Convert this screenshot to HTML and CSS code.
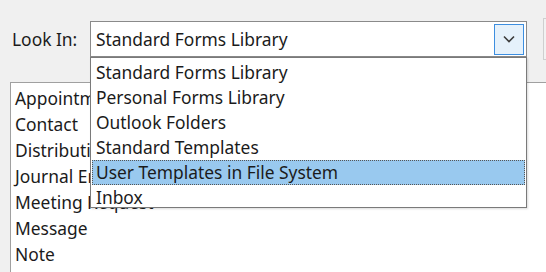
FILE: index.html
```html
<!DOCTYPE html>
<html>
<head>
<meta charset="utf-8">
<link rel="stylesheet" href="styles.css">
</head>
<body>
<div class="dialog">
  <div class="toolbar">
    <span class="label">Look In:</span>
    <div class="combo">
      <span class="combo-text">Standard Forms Library</span>
      <span class="combo-btn">
        <svg width="12" height="8" viewBox="0 0 12 8"><path d="M1 1.5 L6 6.5 L11 1.5" fill="none" stroke="#3c3c3c" stroke-width="1.6"/></svg>
      </span>
    </div>
    <div class="side-btn"></div>
  </div>
  <div class="list">
    <div class="item">Appointment</div>
    <div class="item">Contact</div>
    <div class="item">Distribution List</div>
    <div class="item">Journal Entry</div>
    <div class="item">Meeting Request</div>
    <div class="item">Message</div>
    <div class="item">Note</div>
  </div>
  <ul class="dropdown">
    <li>Standard Forms Library</li>
    <li>Personal Forms Library</li>
    <li>Outlook Folders</li>
    <li>Standard Templates</li>
    <li class="selected">User Templates in File System</li>
    <li>Inbox</li>
  </ul>
</div>
</body>
</html>
```
FILE: styles.css
```css
html, body {
  margin: 0;
  padding: 0;
}
body {
  width: 546px;
  height: 272px;
  overflow: hidden;
  background: #f0f0f0;
  font-family: "Noto Sans", "Open Sans", sans-serif;
  font-size: 17.4px;
  color: #1b1b1b;
}
.dialog {
  position: relative;
  width: 546px;
  height: 272px;
  overflow: hidden;
}
.toolbar {
  height: 82px;
  display: flex;
  align-items: flex-start;
  padding-top: 21px;
  box-sizing: border-box;
}
.label {
  flex: none;
  width: 78px;
  padding-left: 12px;
  line-height: 36px;
}
.combo {
  flex: none;
  width: 437px;
  height: 36px;
  box-sizing: border-box;
  border: 1px solid #8a8a8a;
  background: #fff;
  display: flex;
  align-items: center;
  justify-content: space-between;
  padding: 0 2px 0 5px;
}
.combo-text {
  line-height: 30px;
}
.combo-btn {
  width: 30px;
  height: 31px;
  box-sizing: border-box;
  border: 1px solid #3c8ee0;
  background: #e5f1fb;
  display: flex;
  align-items: center;
  justify-content: center;
}
.side-btn {
  flex: none;
  margin-left: 16px;
  width: 20px;
  height: 42px;
  margin-top: -3px;
  box-sizing: border-box;
  border: 1px solid #cfcfcf;
  border-right: none;
  background: #f2f2f2;
}
.list {
  margin-left: 10px;
  height: 200px;
  background: #fff;
  border-top: 1px solid #a0a0a0;
  border-left: 1px solid #a0a0a0;
  padding: 2px 0 0 4px;
  box-sizing: border-box;
}
.item {
  height: 26px;
  line-height: 26px;
  white-space: nowrap;
}
.dropdown {
  position: absolute;
  left: 90px;
  top: 57px;
  width: 437px;
  height: 151px;
  margin: 0;
  padding: 2px 1px 1px;
  list-style: none;
  box-sizing: border-box;
  background: #fff;
  border: 1px solid #7a7a7a;
  box-shadow: 1px 1px 2px rgba(0,0,0,0.15);
}
.dropdown li {
  height: 25px;
  line-height: 25px;
  padding-left: 4px;
  box-sizing: border-box;
  white-space: nowrap;
}
.dropdown li.selected {
  background: #99c9ef;
  outline: 1px dotted #555;
  outline-offset: -1px;
}
```
